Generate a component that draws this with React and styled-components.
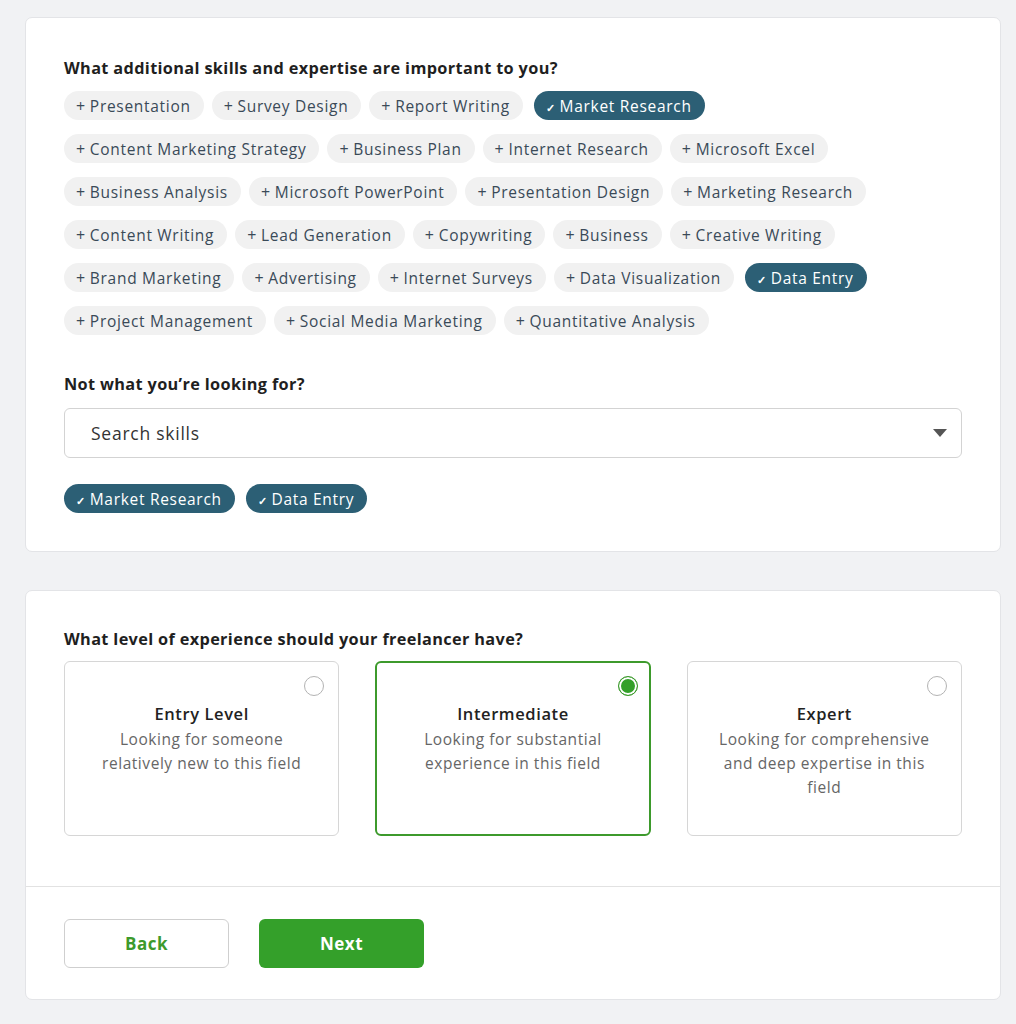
import styled, { createGlobalStyle, css } from "styled-components";

const GlobalStyle = createGlobalStyle`
  * { box-sizing: border-box; }
  body {
    margin: 0;
    background: #f1f2f4;
    font-family: "Open Sans", "Liberation Sans", sans-serif;
    color: #222;
  }
`;

const Page = styled.div`
  padding: 17px 15px 26px 25px;
  display: flex;
  flex-direction: column;
  gap: 38px;
`;

const Card = styled.section`
  background: #fff;
  border: 1px solid #e3e4e7;
  border-radius: 7px;
  display: flex;
  flex-direction: column;
`;

const Body = styled.div`
  padding: ${(p) => p.$pad || "38px"};
  display: flex;
  flex-direction: column;
`;

const Heading = styled.h2`
  margin: 0 0 ${(p) => p.$mb || 10}px;
  font-size: 16.3px;
  font-weight: 700;
  color: #1f1f1f;
  letter-spacing: 0.35px;
`;

const ChipWrap = styled.div`
  display: flex;
  flex-wrap: wrap;
  column-gap: 8px;
  row-gap: 14px;
  margin-bottom: ${(p) => p.$mb || 0}px;
`;

const Chip = styled.button`
  height: 29px;
  padding: 0 13px 0 12px;
  border: none;
  border-radius: 15px;
  font-family: inherit;
  font-size: 15.5px;
  display: flex;
  align-items: center;
  gap: 4px;
  cursor: pointer;
  background: #f1f1f1;
  color: #3a4a58;
  letter-spacing: 0.7px;
  ${(p) =>
    p.$on &&
    css`
      background: #2c5f75;
      color: #fff;
      margin-left: 3px;
    `}
  &:first-child {
    margin-left: 0;
  }
`;

const Mark = styled.span`
  font-size: ${(p) => (p.$check ? 11 : 16)}px;
  position: relative;
  top: ${(p) => (p.$check ? 2 : 0)}px;
  font-weight: ${(p) => (p.$check ? 700 : 400)};
`;

const Select = styled.div`
  height: 50px;
  border: 1px solid #d3d3d3;
  border-radius: 6px;
  display: flex;
  align-items: center;
  justify-content: space-between;
  padding: 0 14px 0 26px;
  margin-bottom: 26px;
  font-size: 17.5px;
  color: #333;
  letter-spacing: 0.75px;
`;

const Caret = styled.span`
  width: 0;
  height: 0;
  border-left: 7px solid transparent;
  border-right: 7px solid transparent;
  border-top: 8px solid #555;
`;

const Levels = styled.div`
  display: grid;
  grid-template-columns: repeat(3, 1fr);
  gap: 36px;
`;

const Level = styled.label`
  position: relative;
  height: 175px;
  border: 1px solid #d6d6d6;
  border-radius: 6px;
  padding: 40px 10px 0;
  text-align: center;
  cursor: pointer;
  ${(p) =>
    p.$on &&
    css`
      border: 2px solid #3d9a2c;
      padding-top: 39px;
    `}
`;

const Radio = styled.span`
  position: absolute;
  top: 14px;
  right: 14px;
  width: 20px;
  height: 20px;
  border-radius: 50%;
  border: 1.5px solid #b3b3b3;
  background: #fff;
  ${(p) =>
    p.$on &&
    css`
      top: 13px;
      right: 11px;
      border: 1.5px solid #3d9a2c;
      box-shadow: inset 0 0 0 2px #fff;
      background: #34a02a;
    `}
`;

const LevelTitle = styled.div`
  font-size: 16.5px;
  font-weight: 600;
  color: #222;
  margin-bottom: 2px;
  letter-spacing: 0.6px;
`;

const LevelDesc = styled.div`
  font-size: 15.5px;
  line-height: 24px;
  color: #666;
  letter-spacing: 0.55px;
`;

const Divider = styled.hr`
  margin: 0;
  border: none;
  border-top: 1px solid #e2e2e2;
`;

const Footer = styled.div`
  padding: 32px 38px 31px;
  display: flex;
  gap: 30px;
`;

const Btn = styled.button`
  width: 165px;
  height: 49px;
  border-radius: 6px;
  font-family: inherit;
  font-size: 17px;
  font-weight: 700;
  cursor: pointer;
  letter-spacing: 0.5px;
  ${(p) =>
    p.$primary
      ? css`
          border: none;
          background: #34a02a;
          color: #fff;
        `
      : css`
          border: 1px solid #cfcfcf;
          background: #fff;
          color: #3d9a2c;
        `}
`;

const skills = [
  "Presentation",
  "Survey Design",
  "Report Writing",
  "Market Research",
  "Content Marketing Strategy",
  "Business Plan",
  "Internet Research",
  "Microsoft Excel",
  "Business Analysis",
  "Microsoft PowerPoint",
  "Presentation Design",
  "Marketing Research",
  "Content Writing",
  "Lead Generation",
  "Copywriting",
  "Business",
  "Creative Writing",
  "Brand Marketing",
  "Advertising",
  "Internet Surveys",
  "Data Visualization",
  "Data Entry",
  "Project Management",
  "Social Media Marketing",
  "Quantitative Analysis",
];

const selected = ["Market Research", "Data Entry"];

const levels = [
  { title: "Entry Level", desc: ["Looking for someone", "relatively new to this field"] },
  { title: "Intermediate", desc: ["Looking for substantial", "experience in this field"], on: true },
  { title: "Expert", desc: ["Looking for comprehensive", "and deep expertise in this", "field"] },
];

function SkillChip({ name }) {
  const on = selected.includes(name);
  return (
    <Chip $on={on}>
      <Mark $check={on}>{on ? "✓" : "+"}</Mark>
      {name}
    </Chip>
  );
}

export default function App() {
  return (
    <>
      <GlobalStyle />
      <Page>
        <Card>
          <Body $pad="39px 38px 38px">
            <Heading $mb={12}>What additional skills and expertise are important to you?</Heading>
            <ChipWrap $mb={38}>
              {skills.map((s) => (
                <SkillChip key={s} name={s} />
              ))}
            </ChipWrap>
            <Heading $mb={13}>Not what you’re looking for?</Heading>
            <Select>
              <span>Search skills</span>
              <Caret />
            </Select>
            <ChipWrap>
              {selected.map((s) => (
                <SkillChip key={s} name={s} />
              ))}
            </ChipWrap>
          </Body>
        </Card>

        <Card>
          <Body $pad="37px 38px 50px">
            <Heading $mb={11}>What level of experience should your freelancer have?</Heading>
            <Levels>
              {levels.map((l) => (
                <Level key={l.title} $on={l.on}>
                  <Radio $on={l.on} />
                  <LevelTitle>{l.title}</LevelTitle>
                  <LevelDesc>
                    {l.desc.map((d) => (
                      <div key={d}>{d}</div>
                    ))}
                  </LevelDesc>
                </Level>
              ))}
            </Levels>
          </Body>
          <Divider />
          <Footer>
            <Btn>Back</Btn>
            <Btn $primary>Next</Btn>
          </Footer>
        </Card>
      </Page>
    </>
  );
}
